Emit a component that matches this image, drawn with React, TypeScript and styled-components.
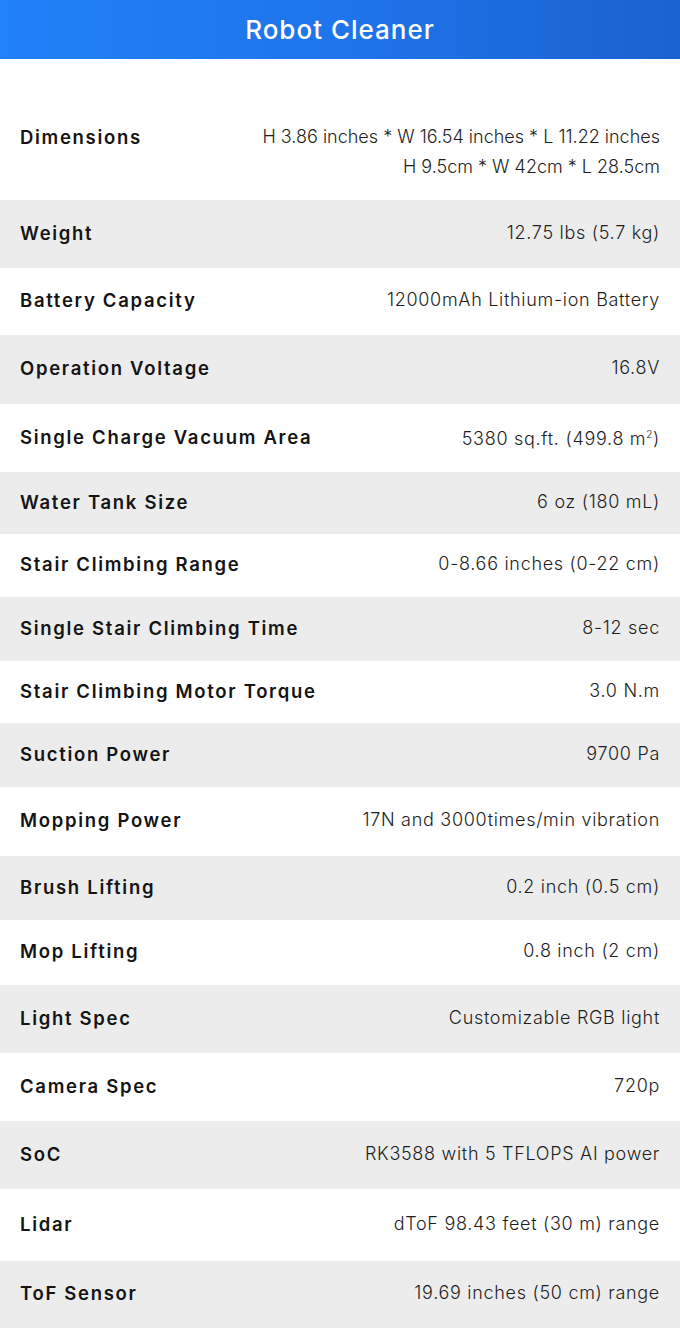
import React from "react";
import styled, { createGlobalStyle } from "styled-components";

const GlobalStyle = createGlobalStyle`
  html, body { margin: 0; padding: 0; background: #ffffff; }
  body { font-family: "Inter", "Liberation Sans", sans-serif; -webkit-font-smoothing: antialiased; }
  * { box-sizing: border-box; }
`;

const Page = styled.div`
  width: 680px;
  display: flex;
  flex-direction: column;
`;

const Header = styled.header`
  height: 59px;
  display: flex;
  align-items: center;
  justify-content: center;
  background: linear-gradient(90deg, #2181f8 0%, #1f74ea 50%, #1a62cf 100%);
`;

const Title = styled.h1`
  margin: 0;
  color: #ffffff;
  font-size: 26px;
  font-weight: 500;
  letter-spacing: 1px;
`;

const Table = styled.div`
  display: flex;
  flex-direction: column;
`;

const Row = styled.div<{ $h: number; $shade: boolean }>`
  height: ${(p) => p.$h}px;
  display: flex;
  align-items: center;
  justify-content: space-between;
  padding: 0 20px 3px 20px;
  background: ${(p) => (p.$shade ? "#ececec" : "#ffffff")};
`;

const TopRow = styled(Row)`
  align-items: flex-start;
  padding-top: 63px;
`;

const Label = styled.div`
  color: #141414;
  font-size: 18.5px;
  font-weight: 600;
  line-height: 30px;
  letter-spacing: 1.7px;
  white-space: nowrap;
`;

const Value = styled.div`
  color: #1e1e1e;
  font-size: 18px;
  font-weight: 300;
  line-height: 30px;
  letter-spacing: 0.7px;
  text-align: right;
  white-space: nowrap;
`;

const DimensionValue = styled(Value)`
  letter-spacing: 0;
`;

const Sup = styled.sup`
  font-size: 0.55em;
`;

type Spec = { label: string; value: React.ReactNode; h: number };

const specs: Spec[] = [
  { label: "Weight", value: "12.75 lbs (5.7 kg)", h: 68 },
  { label: "Battery Capacity", value: "12000mAh Lithium-ion Battery", h: 67 },
  { label: "Operation Voltage", value: "16.8V", h: 69 },
  {
    label: "Single Charge Vacuum Area",
    value: (
      <>
        5380 sq.ft. (499.8 m<Sup>2</Sup>)
      </>
    ),
    h: 68,
  },
  { label: "Water Tank Size", value: "6 oz (180 mL)", h: 62 },
  { label: "Stair Climbing Range", value: "0-8.66 inches (0-22 cm)", h: 63 },
  { label: "Single Stair Climbing Time", value: "8-12 sec", h: 64 },
  { label: "Stair Climbing Motor Torque", value: "3.0 N.m", h: 62 },
  { label: "Suction Power", value: "9700 Pa", h: 64 },
  { label: "Mopping Power", value: "17N and 3000times/min vibration", h: 69 },
  { label: "Brush Lifting", value: "0.2 inch (0.5 cm)", h: 64 },
  { label: "Mop Lifting", value: "0.8 inch (2 cm)", h: 65 },
  { label: "Light Spec", value: "Customizable RGB light", h: 68 },
  { label: "Camera Spec", value: "720p", h: 68 },
  { label: "SoC", value: "RK3588 with 5 TFLOPS AI power", h: 68 },
  { label: "Lidar", value: "dToF 98.43 feet (30 m) range", h: 72 },
  { label: "ToF Sensor", value: "19.69 inches (50 cm) range", h: 67 },
];

export default function App() {
  return (
    <Page>
      <GlobalStyle />
      <Header>
        <Title>Robot Cleaner</Title>
      </Header>
      <Table>
        <TopRow $h={141} $shade={false}>
          <Label>Dimensions</Label>
          <DimensionValue>
            H 3.86 inches * W 16.54 inches * L 11.22 inches
            <br />
            H 9.5cm * W 42cm * L 28.5cm
          </DimensionValue>
        </TopRow>
        {specs.map((s, i) => (
          <Row key={s.label} $h={s.h} $shade={i % 2 === 0}>
            <Label>{s.label}</Label>
            <Value>{s.value}</Value>
          </Row>
        ))}
      </Table>
    </Page>
  );
}
